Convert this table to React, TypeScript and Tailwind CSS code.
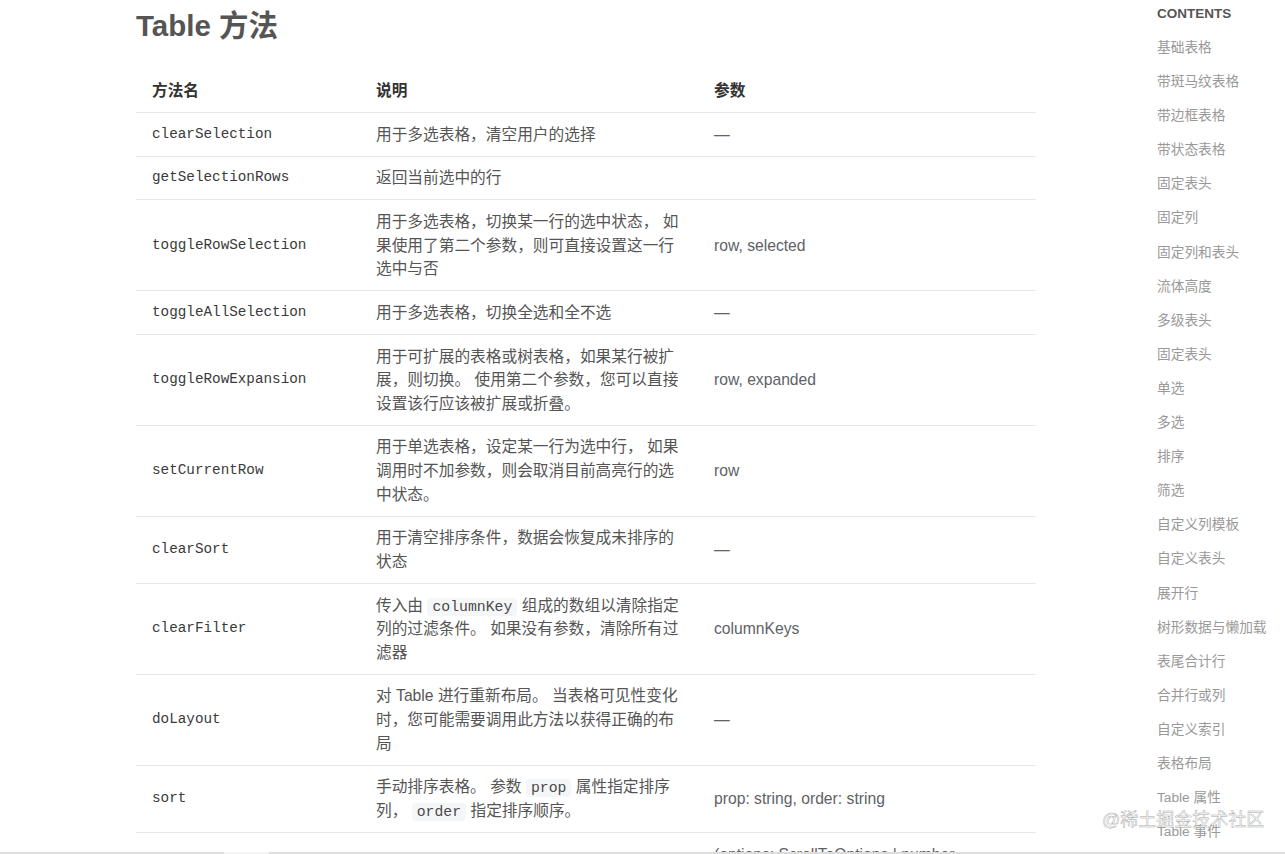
import type { ReactNode } from "react";

const SANS = "font-['Liberation_Sans','Noto_Sans_CJK_SC',sans-serif]";

function Code({ children }: { children: ReactNode }) {
  return (
    <code className="rounded-[4px] bg-[#f5f6f8] px-[5px] py-[1px] font-['Liberation_Mono',monospace] text-[14.8px] leading-none text-[#4a4a4a]">
      {children}
    </code>
  );
}

const ROWS: { name: string; desc: ReactNode; params: string }[] = [
  { name: "clearSelection", desc: "用于多选表格，清空用户的选择", params: "—" },
  { name: "getSelectionRows", desc: "返回当前选中的行", params: "" },
  {
    name: "toggleRowSelection",
    desc: "用于多选表格，切换某一行的选中状态， 如果使用了第二个参数，则可直接设置这一行选中与否",
    params: "row, selected",
  },
  { name: "toggleAllSelection", desc: "用于多选表格，切换全选和全不选", params: "—" },
  {
    name: "toggleRowExpansion",
    desc: "用于可扩展的表格或树表格，如果某行被扩展，则切换。 使用第二个参数，您可以直接设置该行应该被扩展或折叠。",
    params: "row, expanded",
  },
  {
    name: "setCurrentRow",
    desc: "用于单选表格，设定某一行为选中行， 如果调用时不加参数，则会取消目前高亮行的选中状态。",
    params: "row",
  },
  { name: "clearSort", desc: "用于清空排序条件，数据会恢复成未排序的状态", params: "—" },
  {
    name: "clearFilter",
    desc: (
      <>
        传入由 <Code>columnKey</Code> 组成的数组以清除指定列的过滤条件。 如果没有参数，清除所有过滤器
      </>
    ),
    params: "columnKeys",
  },
  {
    name: "doLayout",
    desc: "对 Table 进行重新布局。 当表格可见性变化时，您可能需要调用此方法以获得正确的布局",
    params: "—",
  },
  {
    name: "sort",
    desc: (
      <>
        手动排序表格。 参数 <Code>prop</Code> 属性指定排序列， <Code>order</Code> 指定排序顺序。
      </>
    ),
    params: "prop: string, order: string",
  },
  {
    name: "scrollTo",
    desc: "滚动到一组特定坐标",
    params: "(options: ScrollToOptions | number, yCoord?: number)",
  },
];

const TOC = [
  "基础表格",
  "带斑马纹表格",
  "带边框表格",
  "带状态表格",
  "固定表头",
  "固定列",
  "固定列和表头",
  "流体高度",
  "多级表头",
  "固定表头",
  "单选",
  "多选",
  "排序",
  "筛选",
  "自定义列模板",
  "自定义表头",
  "展开行",
  "树形数据与懒加载",
  "表尾合计行",
  "合并行或列",
  "自定义索引",
  "表格布局",
  "Table 属性",
  "Table 事件",
];

export default function App() {
  return (
    <div className={`relative h-[854px] overflow-hidden bg-white ${SANS}`}>
      <div className="flex">
        <main className="ml-[136px] w-[900px] shrink-0">
          <h2 className="pt-[6px] text-[29.5px] font-bold leading-[40px] text-[#555]">Table 方法</h2>
          <table className="mt-[22px] w-full table-fixed border-collapse text-[15.7px] leading-[23.6px]">
            <colgroup>
              <col className="w-[224px]" />
              <col className="w-[338px]" />
              <col className="w-[338px]" />
            </colgroup>
            <thead>
              <tr className="border-b border-[#e6e8eb]">
                <th className="px-4 pb-[10px] pt-[10.5px] text-left font-bold text-[#333]">方法名</th>
                <th className="px-4 pb-[10px] pt-[10.5px] text-left font-bold text-[#333]">说明</th>
                <th className="px-4 pb-[10px] pt-[10.5px] text-left font-bold text-[#333]">参数</th>
              </tr>
            </thead>
            <tbody>
              {ROWS.map((r) => (
                <tr key={r.name} className="border-b border-[#e6e8eb]">
                  <td className="px-4 py-[9.55px] align-middle font-['Liberation_Mono',monospace] text-[14.3px] text-[#3a3a3a]">
                    {r.name}
                  </td>
                  <td className="px-4 py-[9.55px] align-middle text-[#555]">{r.desc}</td>
                  <td className="px-4 py-[9.55px] align-middle text-[#606266]">{r.params}</td>
                </tr>
              ))}
            </tbody>
          </table>
        </main>

        <aside className="ml-[121px] pt-[4px]">
          <div className="mb-[7px] text-[13.5px] font-bold leading-[20px] text-[#555]">CONTENTS</div>
          <ul>
            {TOC.map((t, i) => (
              <li key={i} className="whitespace-nowrap text-[13.7px] leading-[34.1px] text-[#999]">
                {t}
              </li>
            ))}
          </ul>
        </aside>
      </div>

      <div className="pointer-events-none absolute left-[1102px] top-[808px] whitespace-nowrap text-[18px] leading-[24px] text-white/70 [-webkit-text-stroke:0.45px_#a8a8a8]">
        @稀土掘金技术社区
      </div>

      <div className="pointer-events-none absolute bottom-0 left-0 flex h-[2px] w-full">
        <div className="w-[224px] bg-[#dcdcdc]" />
        <div className="w-[45px] bg-[#f4f4f4]" />
        <div className="flex-1 bg-[#dcdcdc]" />
      </div>
    </div>
  );
}
